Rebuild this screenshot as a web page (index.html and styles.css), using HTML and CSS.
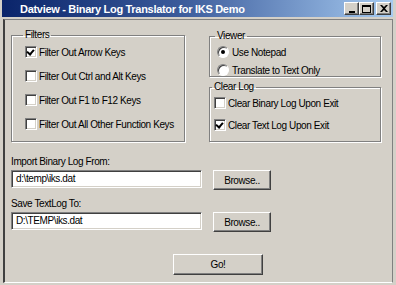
FILE: index.html
```html
<!DOCTYPE html>
<html lang="en">

<head>
    <title>Datview</title>
    <meta charset="UTF-8">
    <link rel="stylesheet" href="styles.css">
</head>

<body>
    <div class="window">
        <div class="titlebar">
            <span class="title">Datview - Binary Log Translator for IKS Demo</span>
            <div class="title-buttons">
                <span class="tbtn"><span class="min-glyph"></span></span>
                <span class="tbtn"><span class="max-glyph"></span></span>
                <span class="tbtn close">
                    <svg width="8" height="7" viewBox="0 0 8 7">
                        <path d="M0 0 L2 0 L4 2 L6 0 L8 0 L5 3.5 L8 7 L6 7 L4 5 L2 7 L0 7 L3 3.5 Z" fill="#000"/>
                    </svg>
                </span>
            </div>
        </div>

        <div class="client">
            <div class="top-row">
                <fieldset class="group filters">
                    <legend>Filters</legend>
                    <div class="option"><span class="check on"></span>Filter Out Arrow Keys</div>
                    <div class="option"><span class="check"></span>Filter Out Ctrl and Alt Keys</div>
                    <div class="option"><span class="check"></span>Filter Out F1 to F12 Keys</div>
                    <div class="option"><span class="check"></span>Filter Out All Other Function Keys</div>
                </fieldset>

                <div class="right-col">
                    <fieldset class="group viewer">
                        <legend>Viewer</legend>
                        <div class="option radio-row"><span class="radio on"></span>Use Notepad</div>
                        <div class="option radio-row"><span class="radio"></span>Translate to Text Only</div>
                    </fieldset>
                    <fieldset class="group clearlog">
                        <legend>Clear Log</legend>
                        <div class="option"><span class="check"></span>Clear Binary Log Upon Exit</div>
                        <div class="option"><span class="check on"></span>Clear Text Log Upon Exit</div>
                    </fieldset>
                </div>
            </div>

            <div class="file-label">Import Binary Log From:</div>
            <div class="file-row">
                <div class="textbox">d:\temp\iks.dat</div>
                <button class="btn browse">Browse..</button>
            </div>

            <div class="file-label">Save TextLog To:</div>
            <div class="file-row">
                <div class="textbox">D:\TEMP\iks.dat</div>
                <button class="btn browse">Browse..</button>
            </div>

            <div class="go-row">
                <button class="btn go">Go!</button>
            </div>
        </div>
    </div>
</body>

</html>
```

FILE: styles.css
```css
body {
    margin: 0;
    background: #d4d0c8;
    font-family: "Liberation Sans", Arial, sans-serif;
    font-size: 10px;
    letter-spacing: -0.4px;
    color: #000;
}

.window {
    width: 396px;
    height: 285px;
    box-sizing: border-box;
    background: #d4d0c8;
    display: flex;
    flex-direction: column;
}

.titlebar {
    height: 17px;
    margin: 0 3px 0 2px;
    background: linear-gradient(to right, #0a246a, #3a5a9a 45%, #a6caf0);
    display: flex;
    align-items: center;
    justify-content: space-between;
}

.title {
    color: #fff;
    font-weight: bold;
    font-size: 11px;
    letter-spacing: -0.3px;
    padding-left: 18px;
}

.title-buttons {
    display: flex;
    padding-right: 2px;
}

.tbtn {
    width: 15px;
    height: 13px;
    box-sizing: border-box;
    background: #d4d0c8;
    border: 1px solid;
    border-color: #fff #404040 #404040 #fff;
    box-shadow: inset -1px -1px 0 #808080;
    display: flex;
    align-items: center;
    justify-content: center;
}

.tbtn.close {
    margin-left: 2px;
}

.min-glyph {
    width: 6px;
    height: 2px;
    background: #000;
    margin-top: 6px;
}

.max-glyph {
    width: 9px;
    height: 8px;
    box-sizing: border-box;
    border: 1px solid #000;
    border-top-width: 2px;
}

.client {
    flex: 1;
    margin: 2px 3px 2px 3px;
    border-top: 1px solid #808080;
    border-left: 2px solid #404040;
    border-right: 1px solid #808080;
    border-bottom: 1px solid #fff;
    padding: 9px 0 0 6px;
}

.top-row {
    display: flex;
    gap: 24px;
}

.group {
    margin: 0;
    padding: 0 0 0 13px;
    border: 1px solid #808080;
    box-shadow: inset 1px 1px 0 #fff, 1px 1px 0 #fff;
    min-width: 0;
}

.group legend {
    padding: 0 2px;
    margin-left: -2px;
    line-height: 12px;
}

.filters {
    width: 174px;
    height: 113px;
    box-sizing: border-box;
}

.right-col {
    display: flex;
    flex-direction: column;
    gap: 4px;
    margin-top: 1px;
}

.viewer {
    width: 172px;
    height: 47px;
    box-sizing: border-box;
    padding-left: 7px;
}

.clearlog {
    width: 172px;
    height: 61px;
    box-sizing: border-box;
    padding-left: 4px;
}

.option {
    display: flex;
    align-items: center;
    height: 24px;
    white-space: nowrap;
    overflow: hidden;
}

.filters .option:first-of-type {
    margin-top: -1px;
}

.radio-row {
    height: 18px;
}

.viewer .radio-row:first-of-type {
    margin-top: 1px;
}

.clearlog .option {
    height: 22px;
}

.clearlog .option:first-of-type {
    margin-top: -1px;
}

.check {
    width: 12px;
    height: 12px;
    box-sizing: border-box;
    background: #fff;
    border: 1px solid;
    border-color: #808080 #fff #fff #808080;
    box-shadow: inset 1px 1px 0 #404040, inset -1px -1px 0 #d4d0c8;
    margin-right: 2px;
    flex: none;
    position: relative;
}

.check.on::after {
    content: "";
    position: absolute;
    left: 2px;
    top: 1px;
    width: 3px;
    height: 5px;
    border: solid #000;
    border-width: 0 2px 2px 0;
    transform: rotate(40deg);
}

.radio {
    width: 12px;
    height: 12px;
    box-sizing: border-box;
    border-radius: 50%;
    background: #fff;
    border: 1px solid;
    border-color: #808080 #fff #fff #808080;
    box-shadow: inset 1px 1px 0 #404040;
    margin-right: 3px;
    flex: none;
    position: relative;
}

.radio.on::after {
    content: "";
    position: absolute;
    left: 3px;
    top: 3px;
    width: 4px;
    height: 4px;
    border-radius: 50%;
    background: #000;
}

.file-label {
    margin-top: 14px;
    line-height: 12px;
}

.file-label + .file-row {
    margin-top: 2px;
}

.file-row + .file-label {
    margin-top: 8px;
}

.file-row {
    display: flex;
    align-items: flex-start;
    gap: 11px;
}

.textbox {
    width: 191px;
    height: 18px;
    box-sizing: border-box;
    background: #fff;
    border: 1px solid;
    border-color: #808080 #fff #fff #808080;
    box-shadow: inset 1px 1px 0 #404040, inset -1px -1px 0 #d4d0c8;
    padding: 0 0 0 4px;
    line-height: 16px;
}

.btn {
    font-family: inherit;
    font-size: 10px;
    letter-spacing: -0.4px;
    color: #000;
    background: #d4d0c8;
    border: 1px solid;
    border-color: #fff #404040 #404040 #fff;
    box-shadow: inset -1px -1px 0 #808080;
    padding: 0;
    border-radius: 0;
}

.browse {
    width: 58px;
    height: 20px;
}

.go-row {
    margin-top: 22px;
    padding-left: 162px;
}

.go {
    width: 90px;
    height: 21px;
}
```
